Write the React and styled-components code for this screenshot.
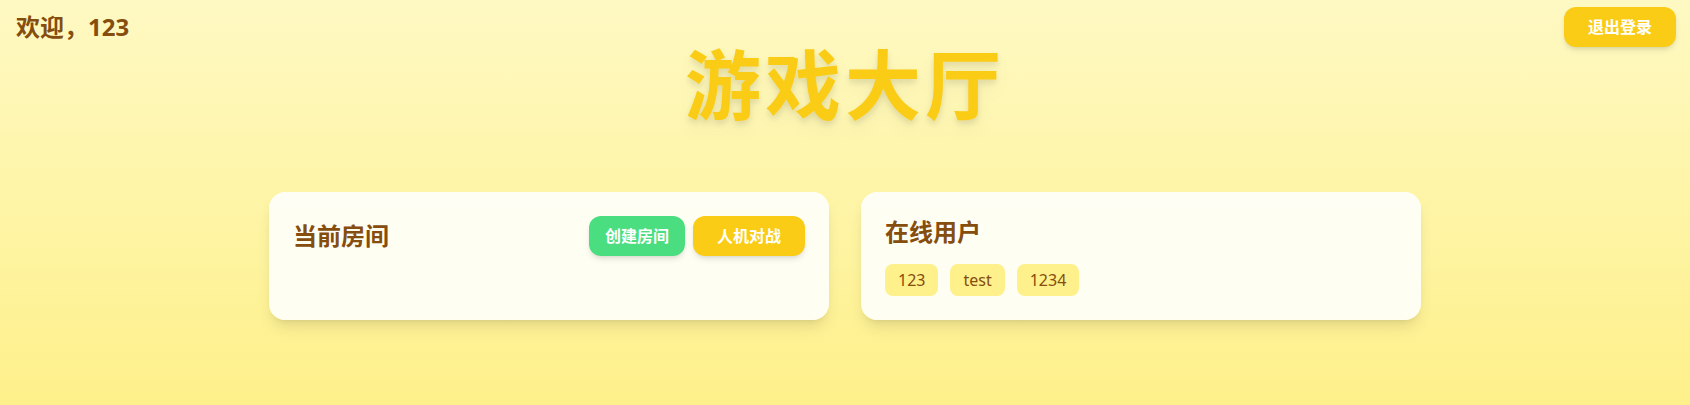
import React from 'react';
import styled, { createGlobalStyle } from 'styled-components';

const GlobalStyle = createGlobalStyle`
  html, body {
    margin: 0;
    padding: 0;
  }
  body {
    font-family: "Noto Sans", "Noto Sans CJK SC", sans-serif;
  }
  * {
    box-sizing: border-box;
  }
`;

const Page = styled.div`
  min-height: 100vh;
  background: linear-gradient(to bottom, #fef9c3, #fef08a);
  color: #854d0e;
`;

const Header = styled.div`
  display: flex;
  justify-content: space-between;
  align-items: center;
  padding: 7px 14px 0 16px;
`;

const Welcome = styled.div`
  font-size: 24px;
  line-height: 32px;
  font-weight: 700;
`;

const Button = styled.button`
  border: none;
  cursor: pointer;
  font-family: inherit;
  font-size: 16px;
  line-height: 24px;
  font-weight: 700;
  color: #fff;
  padding: 8px ${p => p.$px || 24}px;
  border-radius: 12px;
  background: ${p => p.$color || '#facc15'};
  box-shadow: 0 4px 6px -1px rgba(0, 0, 0, 0.1), 0 2px 4px -2px rgba(0, 0, 0, 0.1);
`;

const Title = styled.h1`
  margin: 0;
  text-align: center;
  font-size: 76px;
  line-height: 1;
  font-weight: 700;
  letter-spacing: 4px;
  color: #facc15;
  filter: drop-shadow(0 10px 8px rgba(0, 0, 0, 0.04)) drop-shadow(0 4px 3px rgba(0, 0, 0, 0.1));
`;

const Grid = styled.div`
  display: grid;
  grid-template-columns: 1fr 1fr;
  gap: 32px;
  width: 1152px;
  margin: 69px auto 0;
`;

const Card = styled.div`
  background: rgba(255, 255, 255, 0.87);
  border-radius: 16px;
  padding: 24px;
  box-shadow: 0 10px 15px -3px rgba(0, 0, 0, 0.1), 0 4px 6px -4px rgba(0, 0, 0, 0.1);
`;

const CardHead = styled.div`
  display: flex;
  justify-content: space-between;
  align-items: center;
`;

const CardTitle = styled.h2`
  margin: 0 0 ${p => p.$mb || 0}px;
  font-size: 24px;
  line-height: 32px;
  font-weight: 700;
`;

const Actions = styled.div`
  display: flex;
  gap: 8px;
`;

const Tags = styled.div`
  display: flex;
  flex-wrap: wrap;
  gap: 12px;
`;

const Tag = styled.span`
  background: #fef08a;
  border-radius: 8px;
  padding: 4px 13px;
  font-size: 16px;
  line-height: 24px;
`;

const users = ['123', 'test', '1234'];

export default function App() {
  return (
    <>
      <GlobalStyle />
      <Page>
        <Header>
          <Welcome>欢迎，123</Welcome>
          <Button>退出登录</Button>
        </Header>
        <Title>游戏大厅</Title>
        <Grid>
          <Card>
            <CardHead>
              <CardTitle>当前房间</CardTitle>
              <Actions>
                <Button $color="#4ade80" $px={16}>创建房间</Button>
                <Button>人机对战</Button>
              </Actions>
            </CardHead>
          </Card>
          <Card>
            <CardTitle $mb={16}>在线用户</CardTitle>
            <Tags>
              {users.map(u => <Tag key={u}>{u}</Tag>)}
            </Tags>
          </Card>
        </Grid>
      </Page>
    </>
  );
}
